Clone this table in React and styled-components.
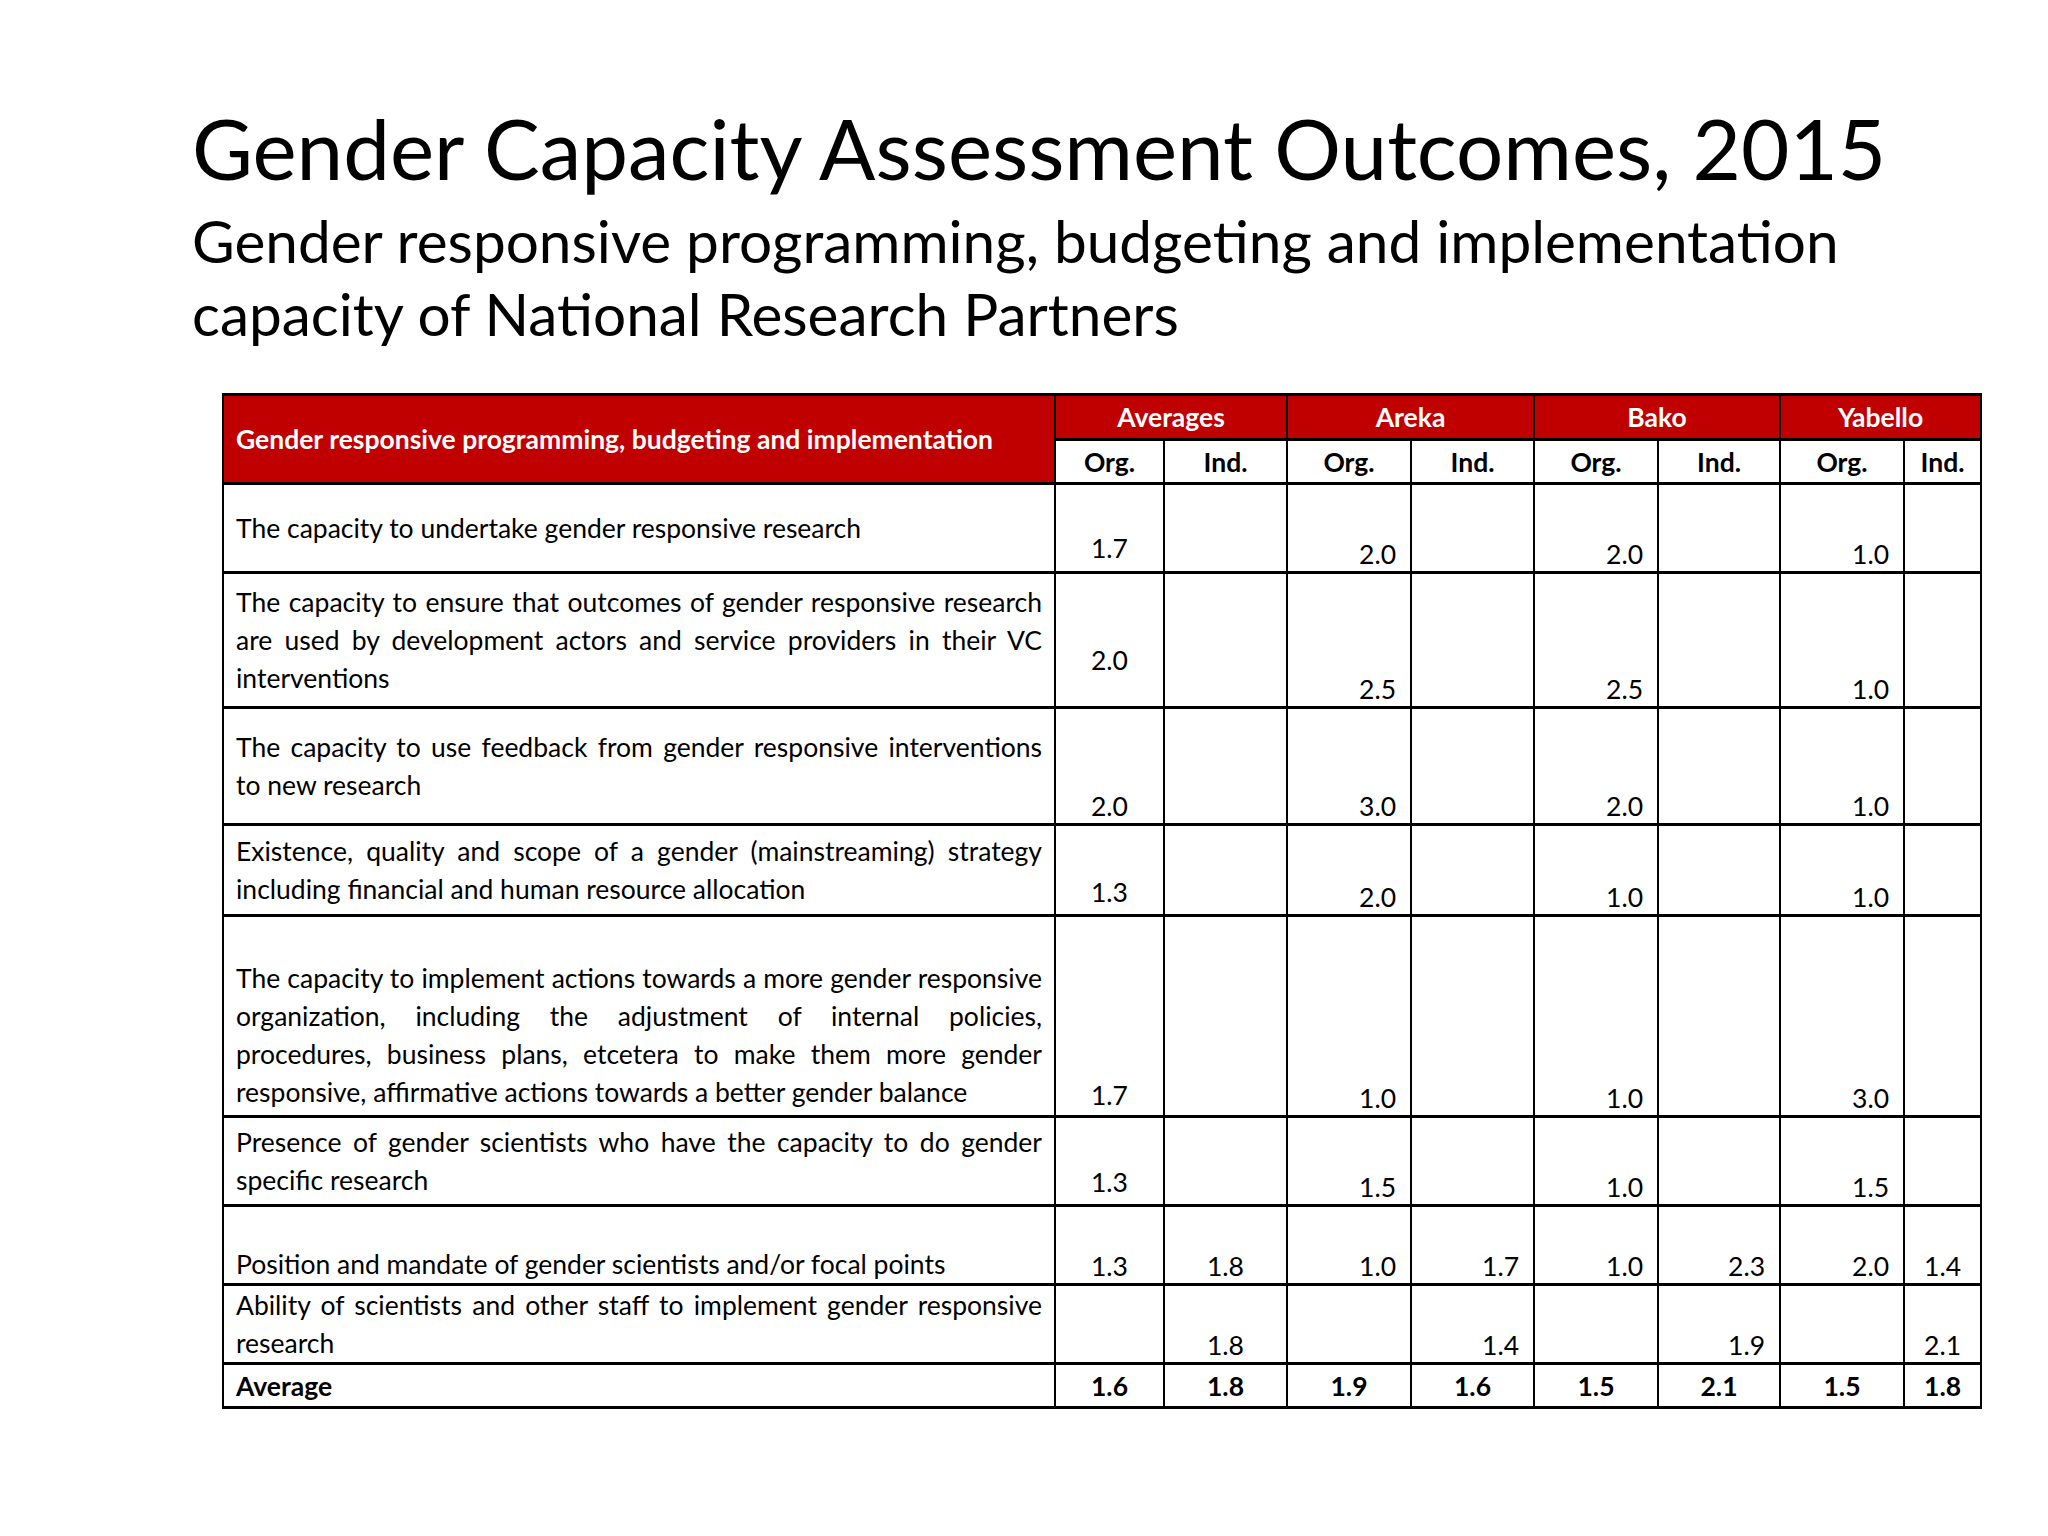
import styled, { createGlobalStyle } from "styled-components";

const GlobalStyle = createGlobalStyle`
  html, body {
    margin: 0;
    padding: 0;
    background: #ffffff;
  }
  body {
    font-family: "Lato", "Open Sans", sans-serif;
    color: #000;
  }
`;

const RED = "#c00000";

const rows = [
  {
    lines: ["The capacity to undertake gender responsive research"],
    height: 89,
    avg: ["1.7", ""],
    lift: 6,
    sites: ["2.0", "", "2.0", "", "1.0", ""],
  },
  {
    lines: [
      "The capacity to ensure that outcomes of gender responsive research",
      "are used by development actors and service providers in their VC",
      "interventions",
    ],
    height: 135,
    avg: ["2.0", ""],
    lift: 29,
    sites: ["2.5", "", "2.5", "", "1.0", ""],
  },
  {
    lines: [
      "The capacity to use feedback from gender responsive interventions",
      "to new research",
    ],
    height: 117,
    avg: ["2.0", ""],
    lift: 0,
    sites: ["3.0", "", "2.0", "", "1.0", ""],
  },
  {
    lines: [
      "Existence, quality and scope of a gender (mainstreaming) strategy",
      "including financial and human resource allocation",
    ],
    height: 91,
    avg: ["1.3", ""],
    lift: 5,
    sites: ["2.0", "", "1.0", "", "1.0", ""],
  },
  {
    lines: [
      "The capacity to implement actions towards a more gender responsive",
      "organization, including the adjustment of internal policies,",
      "procedures, business plans, etcetera to make them more gender",
      "responsive, affirmative actions towards a better gender balance",
    ],
    lead: true,
    height: 201,
    avg: ["1.7", ""],
    lift: 3,
    sites: ["1.0", "", "1.0", "", "3.0", ""],
  },
  {
    lines: [
      "Presence of gender scientists who have the capacity to do gender",
      "specific research",
    ],
    height: 89,
    avg: ["1.3", ""],
    lift: 5,
    sites: ["1.5", "", "1.0", "", "1.5", ""],
  },
  {
    lines: ["Position and mandate of gender scientists and/or focal points"],
    lead: true,
    height: 79,
    avg: ["1.3", "1.8"],
    lift: 0,
    sites: ["1.0", "1.7", "1.0", "2.3", "2.0", "1.4"],
  },
  {
    lines: [
      "Ability of scientists and other staff to implement gender responsive",
      "research",
    ],
    height: 78,
    avg: ["", "1.8"],
    lift: 0,
    sites: ["", "1.4", "", "1.9", "", "2.1"],
  },
];

const totals = ["1.6", "1.8", "1.9", "1.6", "1.5", "2.1", "1.5", "1.8"];
const colWidths = [832, 109, 123, 124, 123, 124, 122, 124, 77];

const App = () => {
  return (
    <Slide>
      <GlobalStyle />
      <Title>Gender Capacity Assessment Outcomes, 2015</Title>
      <Subtitle>
        Gender responsive programming, budgeting and implementation
        <br />
        capacity of National Research Partners
      </Subtitle>

      <Table>
        <colgroup>
          {colWidths.map((w, i) => (
            <col key={i} style={{ width: w }} />
          ))}
        </colgroup>
        <thead>
          <tr>
            <MainHead rowSpan={2}>
              Gender responsive programming, budgeting and implementation
            </MainHead>
            <GroupHead colSpan={2}>Averages</GroupHead>
            <GroupHead colSpan={2}>Areka</GroupHead>
            <GroupHead colSpan={2}>Bako</GroupHead>
            <GroupHead colSpan={2}>Yabello</GroupHead>
          </tr>
          <tr>
            {["Org.", "Ind.", "Org.", "Ind.", "Org.", "Ind.", "Org.", "Ind."].map(
              (t, i) => (
                <SubHead key={i}>{t}</SubHead>
              )
            )}
          </tr>
        </thead>
        <tbody>
          {rows.map((row, r) => (
            <Row key={r} $h={row.height}>
              <Label $lead={row.lead}>
                {row.lines.map((line, i) => (
                  <Line key={i} $justify={i < row.lines.length - 1}>
                    {line}
                  </Line>
                ))}
              </Label>
              <Num $align="center" $lift={row.lift}>
                {row.avg[0]}
              </Num>
              <Num $align="center">{row.avg[1]}</Num>
              {row.sites.map((v, i) => (
                <Num key={i} $align={i === 5 ? "center" : "right"}>
                  {v}
                </Num>
              ))}
            </Row>
          ))}
          <Row $h={44}>
            <TotalLabel>Average</TotalLabel>
            {totals.map((v, i) => (
              <Total key={i}>{v}</Total>
            ))}
          </Row>
        </tbody>
      </Table>
    </Slide>
  );
};

export default App;

const Slide = styled.div`
  width: 2048px;
  height: 1536px;
  box-sizing: border-box;
  padding: 109px 0 0 192px;
  background: #fff;
  font-family: "Lato", "Open Sans", sans-serif;
`;

const Title = styled.h1`
  margin: 0;
  font-size: 83.5px;
  line-height: 78px;
  font-weight: 400;
  white-space: nowrap;
`;

const Subtitle = styled.h2`
  margin: 17px 0 0;
  font-size: 58.5px;
  line-height: 73px;
  font-weight: 400;
  white-space: nowrap;
`;

const Table = styled.table`
  margin: 43px 0 0 30px;
  width: 1758px;
  table-layout: fixed;
  border-collapse: collapse;
  font-size: 26.5px;
  line-height: 38px;

  td, th {
    border-left: 2px solid #000;
    border-right: 2px solid #000;
    border-top: 3px solid #000;
    border-bottom: 3px solid #000;
    padding: 0;
    box-sizing: border-box;
  }
`;

const MainHead = styled.th`
  background: ${RED};
  color: #fff;
  font-weight: 700;
  font-size: 26.5px;
  text-align: left;
  vertical-align: middle;
  padding: 0 12px !important;
  white-space: nowrap;
`;

const GroupHead = styled.th`
  background: ${RED};
  color: #fff;
  font-weight: 700;
  text-align: center;
  height: 45px;
`;

const SubHead = styled.th`
  background: #fff;
  color: #000;
  font-weight: 700;
  text-align: center;
  height: 44px;
`;

const Row = styled.tr`
  height: ${(p) => p.$h}px;
`;

const Label = styled.td`
  vertical-align: middle;
  padding: ${(p) => (p.$lead ? "38px 12px 0" : "0 12px")} !important;
`;

const Line = styled.div`
  text-align: ${(p) => (p.$justify ? "justify" : "left")};
  text-align-last: ${(p) => (p.$justify ? "justify" : "left")};
  white-space: ${(p) => (p.$justify ? "normal" : "nowrap")};
`;

const Num = styled.td`
  vertical-align: bottom;
  line-height: 33px;
  text-align: ${(p) => p.$align};
  padding: 0 ${(p) => (p.$align === "right" ? "14px" : "0")}
    ${(p) => p.$lift || 0}px 0 !important;
`;

const TotalLabel = styled.td`
  font-weight: 700;
  vertical-align: middle;
  padding: 0 12px !important;
`;

const Total = styled.td`
  font-weight: 700;
  text-align: center;
  vertical-align: middle;
`;
